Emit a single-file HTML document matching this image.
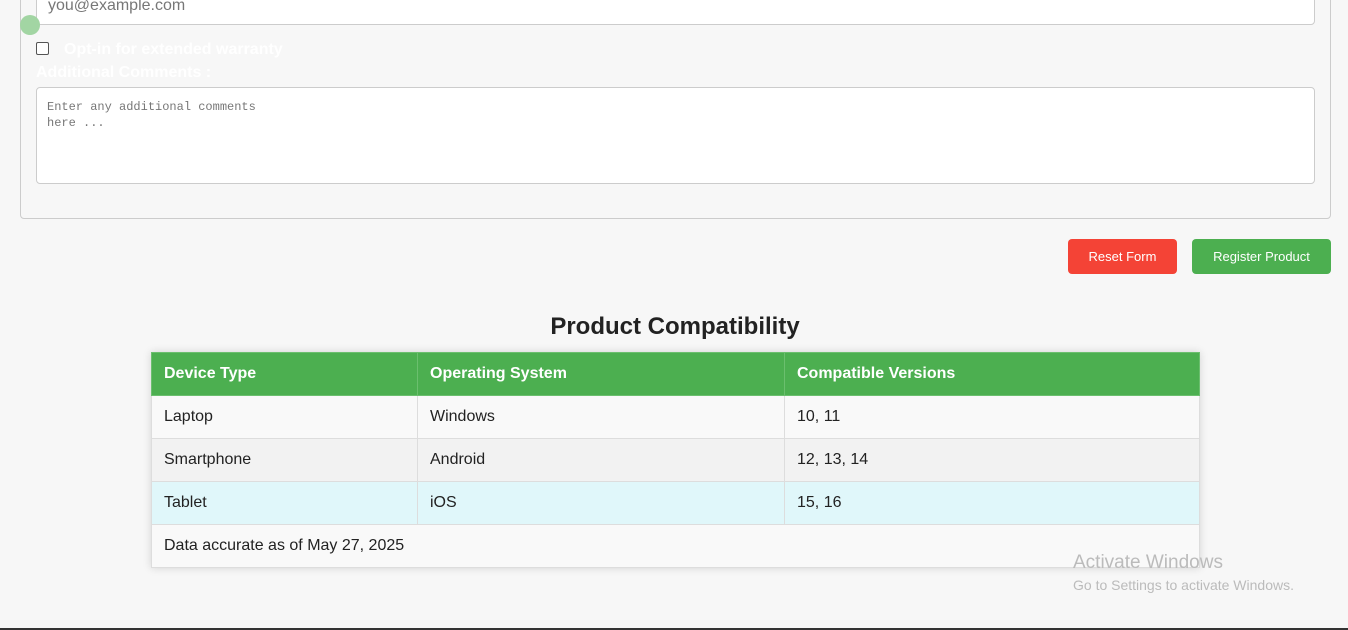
<!DOCTYPE html>
<html><head><style>
body{margin:0;width:1348px;height:630px;background:#f7f7f7;font-family:"Liberation Sans",sans-serif;position:relative;overflow:hidden}
.fs{position:absolute;left:20px;top:-20px;width:1309px;height:237px;border:1px solid #ccc;border-radius:4px}
.inp{position:absolute;left:36px;top:-20px;width:1279px;height:45px;background:#fff;border:1px solid #ccc;border-radius:4px;box-sizing:border-box}
.inp span{position:absolute;left:11px;top:16px;font-size:16px;color:#777}
.dot{position:absolute;left:20px;top:15px;width:20px;height:20px;border-radius:50%;background:#a2d5a3}
.cb{position:absolute;left:36px;top:42px;width:11px;height:11px;border:1px solid #555;border-radius:2px;background:#fff}
.w{position:absolute;color:#fff;font-weight:bold;font-size:16px}
.ta{position:absolute;left:36px;top:87px;width:1279px;height:97px;background:#fff;border:1px solid #ccc;border-radius:4px;box-sizing:border-box;font-family:"Liberation Mono",monospace;font-size:12px;color:#777;padding:11px 10px;line-height:16px}
.btn{position:absolute;top:239px;height:35px;border-radius:4px;color:#fff;font-size:13px;text-align:center;line-height:35px}
h2{position:absolute;left:0;width:1350px;top:313px;margin:0;text-align:center;font-size:24px;color:#222}
table{position:absolute;left:151px;top:352px;width:1049px;border-collapse:collapse;box-shadow:0 0 8px rgba(0,0,0,.15);font-size:16px;color:#222}
td,th{border:1px solid #ddd;height:42px;padding:0 12px;text-align:left}
th{background:#4caf50;color:#fff;border-color:#6bbf6e}
</style></head><body>
<div class="fs"></div>
<div class="inp"><span>you@example.com</span></div>
<div class="dot"></div>
<div class="cb"></div>
<div class="w" style="left:64px;top:41px">Opt-in for extended warranty</div>
<div class="w" style="left:36px;top:64px">Additional Comments :</div>
<div class="ta">Enter any additional comments<br>here ...</div>
<div class="btn" style="left:1068px;width:109px;background:#f44336">Reset Form</div>
<div class="btn" style="left:1192px;width:139px;background:#4caf50">Register Product</div>
<h2>Product Compatibility</h2>
<table>
<tr><th style="width:241px">Device Type</th><th style="width:342px">Operating System</th><th>Compatible Versions</th></tr>
<tr style="background:#f9f9f9"><td>Laptop</td><td>Windows</td><td>10, 11</td></tr>
<tr style="background:#f2f2f2"><td>Smartphone</td><td>Android</td><td>12, 13, 14</td></tr>
<tr style="background:#e0f7fa"><td>Tablet</td><td>iOS</td><td>15, 16</td></tr>
<tr style="background:#f9f9f9"><td colspan="3">Data accurate as of May 27, 2025</td></tr>
</table>
<div style="position:absolute;left:1073px;top:552px;color:#bbb;font-size:19px">Activate Windows</div>
<div style="position:absolute;left:1073px;top:577px;color:#bbb;font-size:14px">Go to Settings to activate Windows.</div>
<div style="position:absolute;left:0;top:628px;width:1348px;height:2px;background:#333"></div>
</body></html>
